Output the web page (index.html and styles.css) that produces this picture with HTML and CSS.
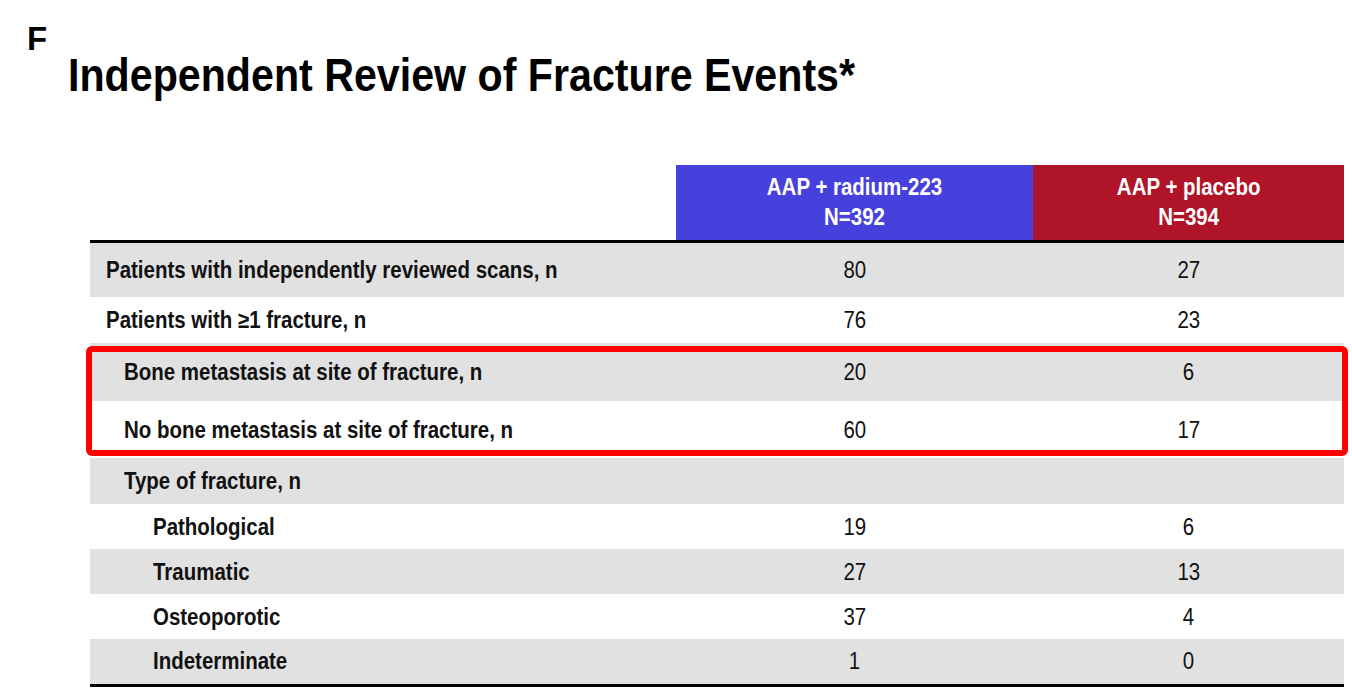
FILE: index.html
```html
<!DOCTYPE html>
<html lang="en">
<head>
<meta charset="utf-8">
<title>Independent Review of Fracture Events</title>
<link rel="stylesheet" href="styles.css">
</head>
<body>
<div class="page">
  <div class="panel-letter">F</div>
  <h1 class="title"><span class="sq-title">Independent Review of Fracture Events*</span></h1>
  <div class="table-wrap">
    <table class="data">
      <colgroup>
        <col class="c-label">
        <col class="c-a">
        <col class="c-b">
      </colgroup>
      <thead>
        <tr class="head">
          <th class="blank"></th>
          <th class="arm arm-ra"><span class="sq sq-c">AAP + radium-223<br>N=392</span></th>
          <th class="arm arm-pl"><span class="sq sq-c">AAP + placebo<br>N=394</span></th>
        </tr>
      </thead>
      <tbody>
        <tr class="gray r1"><td class="l1"><span class="sq">Patients with independently reviewed scans, n</span></td><td><span class="sq sq-c">80</span></td><td><span class="sq sq-c">27</span></td></tr>
        <tr class="white r2"><td class="l1"><span class="sq">Patients with ≥1 fracture, n</span></td><td><span class="sq sq-c">76</span></td><td><span class="sq sq-c">23</span></td></tr>
        <tr class="gray r3"><td class="l2"><span class="sq">Bone metastasis at site of fracture, n</span></td><td><span class="sq sq-c">20</span></td><td><span class="sq sq-c">6</span></td></tr>
        <tr class="white r4"><td class="l2"><span class="sq">No bone metastasis at site of fracture, n</span></td><td><span class="sq sq-c">60</span></td><td><span class="sq sq-c">17</span></td></tr>
        <tr class="gray r5"><td class="l2"><span class="sq">Type of fracture, n</span></td><td></td><td></td></tr>
        <tr class="white r6"><td class="l3"><span class="sq">Pathological</span></td><td><span class="sq sq-c">19</span></td><td><span class="sq sq-c">6</span></td></tr>
        <tr class="gray r6"><td class="l3"><span class="sq">Traumatic</span></td><td><span class="sq sq-c">27</span></td><td><span class="sq sq-c">13</span></td></tr>
        <tr class="white r6"><td class="l3"><span class="sq">Osteoporotic</span></td><td><span class="sq sq-c">37</span></td><td><span class="sq sq-c">4</span></td></tr>
        <tr class="gray r7 last"><td class="l3"><span class="sq">Indeterminate</span></td><td><span class="sq sq-c">1</span></td><td><span class="sq sq-c">0</span></td></tr>
      </tbody>
    </table>
    <div class="highlight"></div>
  </div>
</div>
</body>
</html>
```

FILE: styles.css
```css
html, body {
  margin: 0;
  padding: 0;
  background: #ffffff;
}
body {
  font-family: "Liberation Sans", Arial, sans-serif;
  color: #111111;
}
.page {
  width: 1352px;
  height: 694px;
  overflow: hidden;
  position: relative;
}
.panel-letter {
  font-weight: bold;
  font-size: 33px;
  line-height: 33px;
  padding: 22px 0 0 27px;
  height: 29px;
  color: #000;
}
.title {
  margin: 0;
  padding-left: 68px;
  font-weight: bold;
  font-size: 47px;
  line-height: 48px;
  color: #000;
}
.sq-title {
  display: inline-block;
  transform: scaleX(0.876);
  transform-origin: left center;
  white-space: nowrap;
}
.sq {
  display: inline-block;
  transform: scaleX(0.89);
  transform-origin: left center;
  white-space: nowrap;
}
.sq-c {
  transform-origin: center center;
}
.table-wrap {
  position: relative;
  margin-top: 66px;
  margin-left: 90px;
  width: 1254px;
}
.data {
  border-collapse: collapse;
  table-layout: fixed;
  width: 1254px;
  font-size: 23px;
}
.c-label { width: 586px; }
.c-a { width: 357px; }
.c-b { width: 311px; }
.head { height: 76px; }
.data th {
  padding: 0;
  font-weight: bold;
  color: #ffffff;
  line-height: 30px;
  border-bottom: 3px solid #000;
  vertical-align: middle;
  text-align: center;
}
.data th.blank { background: #fff; }
.arm-ra { background: #4640dc; }
.arm-pl { background: #af1428; }
.data td {
  padding: 0;
  text-align: center;
  vertical-align: middle;
  line-height: 26px;
}
.data td:first-child {
  text-align: left;
  font-weight: bold;
}
.data td.l1 { padding-left: 16px; }
.data td.l2 { padding-left: 34px; }
.data td.l3 { padding-left: 63px; }
.gray td { background: #e1e1e1; }
.white td { background: #ffffff; }
.r1 { height: 56px; }
.r2 { height: 46px; }
.r3 { height: 58px; }
.r4 { height: 57px; }
.r5 { height: 46px; }
.r6 { height: 45px; }
.r7 { height: 46px; }
.last td { border-bottom: 3px solid #000; }
.highlight {
  position: absolute;
  left: -4px;
  top: 181px;
  width: 1250px;
  height: 98px;
  border: 6px solid #ff0000;
  border-radius: 6px;
  pointer-events: none;
}
```
